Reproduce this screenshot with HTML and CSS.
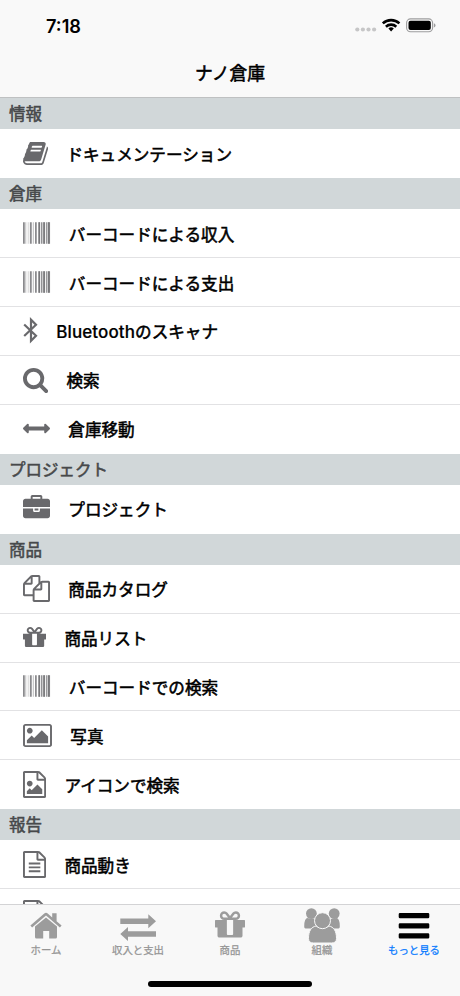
FILE: index.html
```html
<!DOCTYPE html>
<html lang="ja">
<head>
<meta charset="utf-8">
<title>ナノ倉庫</title>
<link rel="stylesheet" href="styles.css">
</head>
<body>
<svg class="defs" aria-hidden="true">
  <symbol id="barcode" viewBox="0 0 28 22"><g fill="#8a8a8d"><path d="M0 0h1.800v22H0z"/><path d="M2.300 0h1v22h-1zM4.900 0h.7v22h-.7zM10 0h1v22h-1z" opacity=".55"/><path d="M7 0h1.900v22H7zM12.200 0h1.800v22h-1.800zM15.600 0h1.900v22h-1.900zM18.400 0h1.400v22h-1.400zM20.600 0h1.800v22h-1.800zM23.300 0h1v22h-1zM25 0h2.600v22H25z"/><path d="M16 0h1v22h-1zM20.900 0h1v22h-1zM25.800 0h1v22h-1z" fill="#707073"/></g></symbol>
  <symbol id="gift" viewBox="128 0 1536 1792"><path d="M1056 1356v-716h-320v716q0 25 18 38.500t46 13.500h192q28 0 46-13.500t18-38.500zm-456-844h195l-126-161q-26-31-69-31-40 0-68 28t-28 68 28 68 68 28zm688-96q0-40-28-68t-68-28q-43 0-69 31l-125 161h194q40 0 68-28t28-68zm376 256v320q0 14-9 23t-23 9h-96v416q0 40-28 68t-68 28h-1088q-40 0-68-28t-28-68v-416h-96q-14 0-23-9t-9-23v-320q0-14 9-23t23-9h440q-93 0-158.500-65.500t-65.500-158.500 65.500-158.500 158.500-65.500q107 0 168 77l128 165 128-165q61-77 168-77 93 0 158.500 65.500t65.500 158.500-65.500 158.500-158.500 65.500h440q14 0 23 9t9 23z"/></symbol>
</svg>
<div class="screen">
  <header class="top">
    <div class="status">
      <span class="time">7:18</span>
      <svg class="signs" viewBox="0 0 82 18">
        <g fill="#c6c6c7"><circle cx="3.300" cy="12.500" r="2.100"/><circle cx="8.900" cy="12.500" r="2.100"/><circle cx="14.500" cy="12.500" r="2.100"/><circle cx="20.100" cy="12.500" r="2.100"/></g>
        <g transform="translate(1 .5)">
        <g fill="none" stroke="#000" stroke-width="2.600"><path d="M27.800 5.900a12.200 12.200 0 0 1 16.600 0"/><path d="M30.900 9.200a7.600 7.600 0 0 1 10.400 0"/></g>
        <path d="M33.400 11.100a4 4 0 0 1 5.400 0L36.100 13.900z"/>
        </g>
        <g transform="translate(.9 .7)">
        <rect x="51.700" y="1.200" width="26" height="12.800" rx="3.900" fill="none" stroke="#9d9d9e" stroke-width="1.100"/>
        <rect x="53.600" y="3" width="22.300" height="9.200" rx="2"/>
        <path d="M79 5.600v4.200q1.600-.6 1.600-2.100T79 5.600z" fill="#9d9d9e"/>
        </g>
      </svg>
    </div>
    <h1>ナノ倉庫</h1>
  </header>
  <main class="list">
    <h2>情報</h2>
    <div class="row"><svg class="w25" viewBox="64 0 1664 1792"><path d="M1703 478q40 57 18 129l-275 906q-19 64-76.500 107.500t-122.500 43.500h-923q-77 0-148.500-53.500t-99.500-131.500q-24-67-2-127 0-4 3-27t4-37q1-8-3-21.500t-3-19.500q2-11 8-21t16.500-23.500 16.500-23.500q23-38 45-91.500t30-91.500q3-10 .5-30t-.5-28q3-11 17-28t17-23q21-36 42-92t25-90q1-9-2.500-32t.5-28q4-13 22-30.500t22-22.500q19-26 42.500-84.500t27.500-96.500q1-8-3-25.500t-2-26.500q2-8 9-18t18-23 17-21q8-12 16.500-30.500t15-35 16-36 19.500-32 26.500-23.500 36-11.500 47.500 5.500l-1 3q38-9 51-9h761q74 0 114 56t18 130l-274 906q-36 119-71.500 153.500t-128.500 34.500h-869q-27 0-38 15-11 16-1 43 24 70 144 70h923q29 0 56-15.500t35-41.500l300-987q7-22 5-57 38 15 59 43zm-1064 2q-4 13 2 22.500t20 9.500h608q13 0 25.500-9.500t16.500-22.500l21-64q4-13-2-22.500t-20-9.500h-608q-13 0-25.500 9.500t-16.500 22.500zm-83 256q-4 13 2 22.500t20 9.500h608q13 0 25.500-9.500t16.500-22.500l21-64q4-13-2-22.500t-20-9.500h-608q-13 0-25.500 9.500t-16.500 22.500z"/></svg><span>ドキュメンテーション</span></div>
    <h2>倉庫</h2>
    <div class="row"><svg class="bars"><use href="#barcode"/></svg><span>バーコードによる収入</span></div>
    <div class="row"><svg class="bars"><use href="#barcode"/></svg><span>バーコードによる支出</span></div>
    <div class="row"><svg class="w15" viewBox="0 0 15 27"><path d="M1.200 7.500 13 18.800 8 23.800V2.700L13 7.700 1.200 19" fill="none" stroke="#69696c" stroke-width="2.200"/></svg><span><b class="latin">Bluetooth</b>のスキャナ</span></div>
    <div class="row"><svg class="w25" viewBox="64 0 1664 1792"><path d="M1216 832q0-185-131.500-316.500t-316.500-131.500-316.500 131.500-131.500 316.500 131.500 316.500 316.500 131.500 316.500-131.500 131.500-316.500zm512 832q0 52-38 90t-90 38q-54 0-90-38l-343-342q-179 124-399 124-143 0-273.500-55.500t-225-150-150-225-55.500-273.500 55.500-273.500 150-225 225-150 273.500-55.500 273.500 55.500 225 150 150 225 55.500 273.500q0 220-124 399l343 343q37 37 37 90z"/></svg><span>検索</span></div>
    <div class="row"><svg class="w27" viewBox="0 0 1792 1792"><path d="M1792 896q0 26-19 45l-256 256q-19 19-45 19t-45-19-19-45v-128h-1024v128q0 26-19 45t-45 19-45-19l-256-256q-19-19-19-45t19-45l256-256q19-19 45-19t45 19 19 45v128h1024v-128q0-26 19-45t45-19 45 19l256 256q19 19 19 45z"/></svg><span>倉庫移動</span></div>
    <h2>プロジェクト</h2>
    <div class="row"><svg class="w27" viewBox="0 0 1792 1792"><path d="M640 256h512v-128h-512v128zm1152 640v480q0 66-47 113t-113 47h-1472q-66 0-113-47t-47-113v-480h672v160q0 26 19 45t45 19h320q26 0 45-19t19-45v-160h672zm-768 0v128h-256v-128h256zm768-480v384h-1792v-384q0-66 47-113t113-47h352v-160q0-40 28-68t68-28h576q40 0 68 28t28 68v160h352q66 0 113 47t47 113z"/></svg><span>プロジェクト</span></div>
    <h2>商品</h2>
    <div class="row"><svg class="w27" viewBox="0 0 1792 1792"><path d="M1696 384q40 0 68 28t28 68v1216q0 40-28 68t-68 28h-960q-40 0-68-28t-28-68v-288h-544q-40 0-68-28t-28-68v-672q0-40 20-88t48-76l408-408q28-28 76-48t88-20h416q40 0 68 28t28 68v328q68-40 128-40h416zm-544 213l-299 299h299v-299zm-640-384l-299 299h299v-299zm196 647l316-316v-416h-384v416q0 40-28 68t-68 28h-416v640h512v-256q0-40 20-88t48-76zm956 804v-1152h-384v416q0 40-28 68t-68 28h-416v640h896z"/></svg><span>商品カタログ</span></div>
    <div class="row"><svg class="w23"><use href="#gift"/></svg><span>商品リスト</span></div>
    <div class="row"><svg class="bars"><use href="#barcode"/></svg><span>バーコードでの検索</span></div>
    <div class="row"><svg class="w29" viewBox="-64 0 1920 1792"><path d="M576 576q0 80-56 136t-136 56-136-56-56-136 56-136 136-56 136 56 56 136zm1024 384v448h-1408v-192l320-320 160 160 512-512zm96-704h-1600q-13 0-22.500 9.500t-9.500 22.500v1216q0 13 9.500 22.500t22.500 9.500h1600q13 0 22.500-9.500t9.500-22.500v-1216q0-13-9.500-22.500t-22.500-9.500zm160 32v1216q0 66-47 113t-113 47h-1600q-66 0-113-47t-47-113v-1216q0-66 47-113t113-47h1600q66 0 113 47t47 113z"/></svg><span>写真</span></div>
    <div class="row"><svg class="w23" viewBox="128 0 1536 1792"><path d="M1596 380q28 28 48 76t20 88v1152q0 40-28 68t-68 28h-1344q-40 0-68-28t-28-68v-1600q0-40 28-68t68-28h896q40 0 88 20t76 48zm-444-244v376h376q-10-29-22-41l-313-313q-12-12-41-22zm384 1528v-1024h-416q-40 0-68-28t-28-68v-416h-768v1536h1280zm-128-448v320h-1024v-192l192-192 128 128 384-384zm-832-192q-80 0-136-56t-56-136 56-136 136-56 136 56 56 136-56 136-136 56z"/></svg><span>アイコンで検索</span></div>
    <h2>報告</h2>
    <div class="row"><svg class="w23" viewBox="128 0 1536 1792"><path d="M1596 380q28 28 48 76t20 88v1152q0 40-28 68t-68 28h-1344q-40 0-68-28t-28-68v-1600q0-40 28-68t68-28h896q40 0 88 20t76 48zm-444-244v376h376q-10-29-22-41l-313-313q-12-12-41-22zm384 1528v-1024h-416q-40 0-68-28t-28-68v-416h-768v1536h1280zM512 768h768v128H512zM512 1024h768v128H512zM512 1280h768v128H512z"/></svg><span>商品動き</span></div>
    <div class="row"><svg class="w23" viewBox="128 0 1536 1792"><path d="M1596 380q28 28 48 76t20 88v1152q0 40-28 68t-68 28h-1344q-40 0-68-28t-28-68v-1600q0-40 28-68t68-28h896q40 0 88 20t76 48zm-444-244v376h376q-10-29-22-41l-313-313q-12-12-41-22zm384 1528v-1024h-416q-40 0-68-28t-28-68v-416h-768v1536h1280z"/></svg></div>
  </main>
  <footer class="bottom">
    <nav>
      <div class="tab"><svg viewBox="0 0 38 36"><path d="M19 10.500 30 19.500V30q0 1.500-1.500 1.500h-6.300v-7.500h-6v7.500H9.500Q8 31.500 8 30V19.500zM3.400 18.400 17.300 6.500q1.700-1.300 3.400 0l4.500 3.900V6.300h4.400v8l5 4.100-1.700 2.100L19 8.600 5.100 20.500z"/></svg><span>ホーム</span></div>
      <div class="tab"><svg viewBox="0 0 38 36"><path d="M1.300 11.500h28V7.200l7.700 7-7.700 7v-4.300h-28zM37 24.300H9V20l-7.700 7L9 34v-4.300h28z"/></svg><span>収入と支出</span></div>
      <div class="tab"><svg class="present"><use href="#gift"/></svg><span>商品</span></div>
      <div class="tab"><svg viewBox="0 0 38 36"><circle cx="8.400" cy="6.600" r="5.400"/><circle cx="31.200" cy="6.600" r="5.400"/><path d="M1.200 19.500q0-8.500 3.500-8.500 3.700 1.800 7 .5 0 5 4 10H2.500q-1.300 0-1.300-2zM36.800 19.500q0-8.500-3.500-8.500-3.700 1.800-7 .5 0 5-4 10h13.200q1.300 0 1.300-2z"/><path d="M5.500 31.500c0-8 3-11.500 7.500-12.500 4 2.500 9 2.500 13 0 4.500 1 7.500 4.500 7.500 12.500q0 4.500-5 4.500h-18q-5 0-5-4.500z" stroke="#f8f8f8" stroke-width="1"/><circle cx="19.500" cy="13.700" r="8" stroke="#f8f8f8" stroke-width="1"/></svg><span>組織</span></div>
      <div class="tab active"><svg viewBox="0 0 38 36"><path d="M5 6h28q1.300 0 1.300 1.300v2.700q0 1.300-1.300 1.300H5q-1.300 0-1.300-1.300V7.300q0-1.300 1.300-1.300zM5 16.200h28q1.300 0 1.300 1.300v2.700q0 1.300-1.300 1.300H5q-1.300 0-1.300-1.300v-2.700q0-1.300 1.300-1.300zM5 26.300h28q1.300 0 1.300 1.300v2.700q0 1.300-1.300 1.300H5q-1.300 0-1.300-1.300v-2.700q0-1.300 1.300-1.300z"/></svg><span>もっと見る</span></div>
    </nav>
    <div class="home-bar"></div>
  </footer>
</div>
</body>
</html>
```
FILE: styles.css
```css
* { box-sizing: border-box; }
body {
  margin: 0;
  background: #fff;
  font-family: Inter, "Noto Sans CJK JP", sans-serif;
}
.defs { display: none; }
.screen {
  width: 460px;
  height: 996px;
  display: flex;
  flex-direction: column;
  overflow: hidden;
}
.top {
  flex: none;
  height: 98.200px;
  background: #f9f9f9;
  border-bottom: 1px solid #bfc1c2;
}
.status {
  height: 49px;
  padding: 2px 24px 0 46px;
  display: flex;
  justify-content: space-between;
  align-items: center;
}
.time { font-size: 18.200px; font-weight: 600; }
.signs { width: 82px; height: 18px; }
h1 {
  margin: 0;
  height: 48px;
  line-height: 49px;
  text-align: center;
  font-size: 17.800px;
  font-weight: 400;
  -webkit-text-stroke: .55px #000;
}
.list { flex: 1; min-height: 0; overflow: hidden; }
h2 {
  margin: 0;
  height: 31.110px;
  line-height: 32px;
  padding-left: 9px;
  background: #d1d7d9;
  color: #47494b;
  font-size: 16.500px;
  font-weight: 400;
  -webkit-text-stroke: .55px #47494b;
}
.row {
  height: 48.890px;
  padding-left: 23.300px;
  display: flex;
  align-items: center;
  gap: 18px;
  border-bottom: 1px solid #e2e2e4;
  font-size: 16.600px;
  font-weight: 400;
  -webkit-text-stroke: .55px #000;
  color: #000;
}
.row:has(+ h2) { border-bottom-color: transparent; }
.row svg { flex: none; height: 27px; fill: #69696c; -webkit-text-stroke: 0; }
.row span { white-space: nowrap; padding-top: 1px; }
.latin { font-size: 17px; font-weight: 500; letter-spacing: .1px; -webkit-text-stroke: .2px #000; }
.w15 { width: 15px; }
.w23 { width: 23.100px; }
.w25 { width: 25.100px; }
.w27 { width: 27px; }
.w29 { width: 29px; }
.row .bars { width: 27.500px; height: 22px; }
.bottom {
  flex: none;
  height: 92.200px;
  background: #f8f8f8;
  border-top: 1px solid #d3d3d5;
  display: flex;
  flex-direction: column;
  align-items: center;
}
nav { width: 100%; height: 78px; display: flex; }
.tab {
  flex: 1;
  padding-top: 2px;
  display: flex;
  flex-direction: column;
  align-items: center;
  color: #959595;
  fill: #9c9c9c;
  font-size: 10.400px;
  -webkit-text-stroke: .25px currentColor;
}
.tab svg { width: 38px; height: 36px; }
.tab .present { width: 30px; }
.tab span { line-height: 16px; white-space: nowrap; }
.active { color: #087aff; fill: #000; }
.home-bar { width: 164px; height: 5.500px; margin-top: -1.500px; border-radius: 3px; background: #000; }
```
